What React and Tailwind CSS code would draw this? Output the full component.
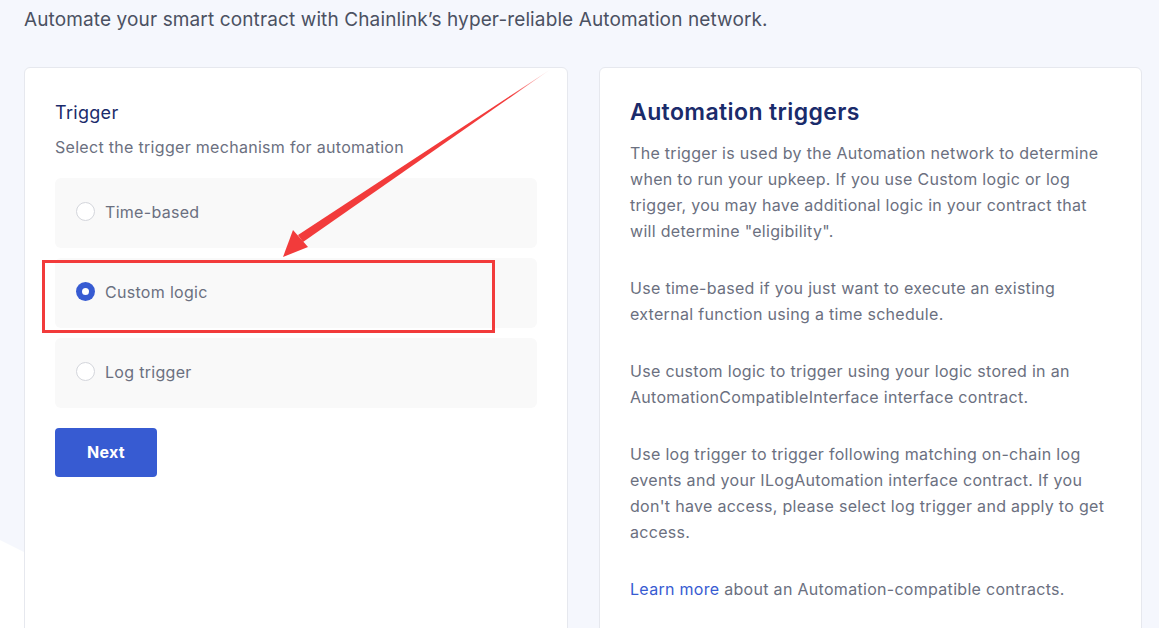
import React from 'react';

const options = [
    { id: 'time', label: 'Time-based' },
    { id: 'custom', label: 'Custom logic' },
    { id: 'log', label: 'Log trigger' },
];

const Radio = ({ checked }) => (
    checked ? (
        <span className="w-[19px] h-[19px] rounded-full bg-[#375bd2] flex items-center justify-center shrink-0">
            <span className="w-[7px] h-[7px] rounded-full bg-white" />
        </span>
    ) : (
        <span className="w-[19px] h-[19px] rounded-full border border-[#d4d6dc] bg-white shrink-0" />
    )
);

const App = () => {
    const selected = 'custom';

    return (
        <div className="relative w-[1159px] h-[628px] overflow-hidden bg-[#f5f7fd] text-[#6b7080] tracking-[0.3px]" style={{ fontFamily: 'Inter, "Noto Sans", sans-serif' }}>
            {/* background shape */}
            <svg className="absolute inset-0 pointer-events-none" width="1159" height="628">
                <polygon points="0,540 40,560 40,628 0,628" fill="#ffffff" />
            </svg>

            <div className="relative pl-6 pr-[17px]">
                <p className="pt-[8px] text-[19px] leading-[24px] tracking-[0.12px] text-[#4b5162]">
                    Automate your smart contract with Chainlink’s hyper-reliable Automation network.
                </p>

                <div className="flex gap-[31px] mt-[35px]">
                    {/* Trigger card */}
                    <div className="w-[544px] shrink-0 h-[600px] bg-white border border-[#e6e8ee] rounded-md px-[30px] pt-[32px]">
                        <h2 className="text-[18px] leading-[26px] text-[#1a2b6b]">Trigger</h2>
                        <p className="mt-[9px] text-[16px] leading-[24px] text-[#6b7080]">Select the trigger mechanism for automation</p>
                        <div className="mt-[19px] flex flex-col gap-[10px]">
                            {options.map(o => (
                                <div key={o.id} className="h-[70px] bg-[#f9f9f9] rounded-md flex items-center gap-[10px] px-[21px] pb-[3px]">
                                    <Radio checked={o.id === selected} />
                                    <span className="text-[16px] text-[#6b7080]">{o.label}</span>
                                </div>
                            ))}
                        </div>
                        <button className="mt-[20px] w-[102px] h-[49px] bg-[#375bd2] rounded text-white font-bold text-[16px] pb-[2px]">
                            Next
                        </button>
                    </div>

                    {/* Info card */}
                    <div className="w-[543px] shrink-0 h-[600px] bg-white border border-[#e6e8ee] rounded-md px-[30px] pt-[30px]">
                        <h2 className="text-[23px] leading-[28px] font-semibold tracking-[0.4px] text-[#1a2b6b]">Automation triggers</h2>
                        <div className="mt-[14px] text-[16px] leading-[26px] text-[#6b7080] space-y-[31px]">
                            <p>The trigger is used by the Automation network to determine when to run your upkeep. If you use Custom logic or log trigger, you may have additional logic in your contract that will determine "eligibility".</p>
                            <p>Use time-based if you just want to execute an existing external function using a time schedule.</p>
                            <p>Use custom logic to trigger using your logic stored in an AutomationCompatibleInterface interface contract.</p>
                            <p>Use log trigger to trigger following matching on-chain log events and your ILogAutomation interface contract. If you don't have access, please select log trigger and apply to get access.</p>
                            <p><a className="text-[#375bd2]">Learn more</a> about an Automation-compatible contracts.</p>
                        </div>
                    </div>
                </div>
            </div>

            {/* annotation */}
            <div className="absolute left-[42px] top-[260px] w-[453px] h-[73px] border-[3px] border-[#f23b3b]" />
            <svg className="absolute inset-0 pointer-events-none" width="1159" height="628">
                <defs>
                    <linearGradient id="ag" x1="551" y1="69" x2="283" y2="257" gradientUnits="userSpaceOnUse">
                        <stop offset="0" stopColor="#f23b3b" stopOpacity="0.1" />
                        <stop offset="0.15" stopColor="#f23b3b" />
                        <stop offset="1" stopColor="#f23b3b" />
                    </linearGradient>
                </defs>
                <path d="M551,69 L303,242 L298,235 Z" fill="url(#ag)" />
                <polygon points="283,257 293,230 308,247" fill="#f23b3b" />
            </svg>
        </div>
    );
};

export default App;
